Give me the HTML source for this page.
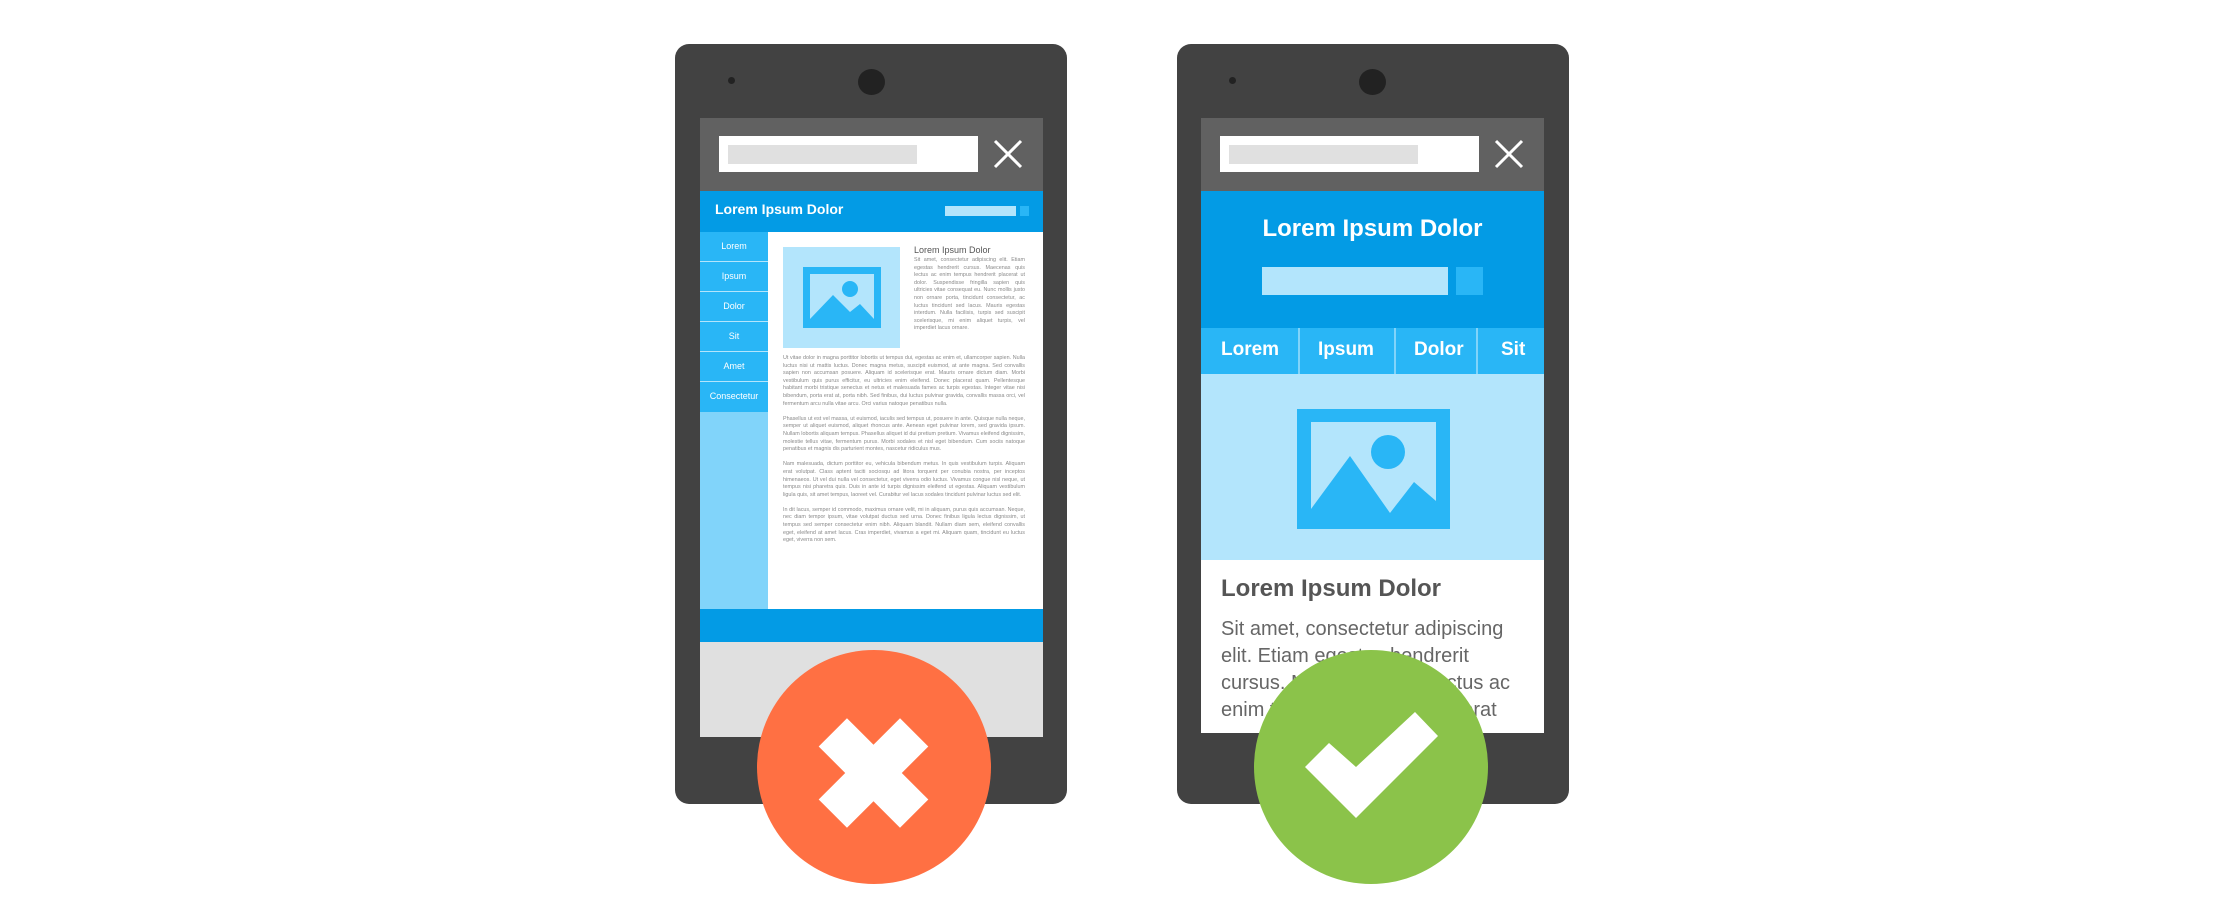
<!DOCTYPE html>
<html><head><meta charset="utf-8"><style>
*{margin:0;padding:0;box-sizing:border-box}
body{width:2234px;height:902px;background:#fff;position:relative;overflow:hidden;font-family:"Liberation Sans",Arial,sans-serif}
.a{position:absolute}
.phone{background:#424242;border-radius:14px}
.tiny{font-size:5.4px;line-height:7.6px;color:#8a8a8a;text-align:justify;overflow:hidden}
</style></head><body>

<!-- LEFT PHONE -->
<div class="a phone" style="left:675px;top:44px;width:392px;height:760px"></div>
<div class="a" style="left:728px;top:77px;width:7px;height:7px;border-radius:50%;background:#222"></div>
<div class="a" style="left:858px;top:69px;width:27px;height:26px;border-radius:50%;background:#222"></div>
<div class="a" style="left:700px;top:118px;width:343px;height:619px;background:#e0e0e0"></div>
<div class="a" style="left:700px;top:118px;width:343px;height:73px;background:#616161"></div>
<div class="a" style="left:719px;top:136px;width:259px;height:36px;background:#fff"></div>
<div class="a" style="left:728px;top:145px;width:189px;height:19px;background:#e0e0e0"></div>
<svg class="a" style="left:992px;top:138px" width="32" height="32"><path d="M3 3L29 29M29 3L3 29" stroke="#fff" stroke-width="3"/></svg>
<div class="a" style="left:700px;top:191px;width:343px;height:41px;background:#039be5"></div>
<div class="a" style="left:715px;top:201px;color:#fff;font-weight:bold;font-size:14px">Lorem Ipsum Dolor</div>
<div class="a" style="left:945px;top:206px;width:71px;height:10px;background:#b3e5fc"></div>
<div class="a" style="left:1020px;top:206px;width:9px;height:10px;background:#29b6f6"></div>
<div class="a" style="left:700px;top:232px;width:343px;height:377px;background:#fff"></div>
<div class="a" style="left:700px;top:232px;width:68px;height:377px;background:#81d4fa"></div>
<div class="a" style="left:700px;top:232px;width:68px;font-size:9px;color:#fff;text-align:center">
<div style="height:30px;line-height:29px;background:#29b6f6;border-bottom:1.5px solid #b3e5fc">Lorem</div>
<div style="height:30px;line-height:29px;background:#29b6f6;border-bottom:1.5px solid #b3e5fc">Ipsum</div>
<div style="height:30px;line-height:29px;background:#29b6f6;border-bottom:1.5px solid #b3e5fc">Dolor</div>
<div style="height:30px;line-height:29px;background:#29b6f6;border-bottom:1.5px solid #b3e5fc">Sit</div>
<div style="height:30px;line-height:29px;background:#29b6f6;border-bottom:1.5px solid #b3e5fc">Amet</div>
<div style="height:30px;line-height:29px;background:#29b6f6">Consectetur</div>
</div>
<div class="a" style="left:783px;top:247px;width:117px;height:101px;background:#b3e5fc"></div>
<svg class="a" style="left:803px;top:267px" width="78" height="61" viewBox="0 0 78 61"><rect width="78" height="61" fill="#29b6f6"/><rect x="7" y="7" width="64" height="45" fill="#b3e5fc"/><path d="M7 52L30 28L47 45L57 37L71 52Z" fill="#29b6f6"/><circle cx="47" cy="22" r="8" fill="#29b6f6"/></svg>
<div class="a" style="left:914px;top:245px;font-size:9px;color:#555">Lorem Ipsum Dolor</div>
<div class="a tiny" style="left:914px;top:257px;width:111px;height:92px">Sit amet, consectetur adipiscing elit. Etiam egestas hendrerit cursus. Maecenas quis lectus ac enim tempus hendrerit placerat ut dolor. Suspendisse fringilla sapien quis ultricies vitae consequat eu. Nunc mollis justo non ornare porta, tincidunt consectetur, ac luctus tincidunt sed lacus. Mauris egestas interdum. Nulla facilisis, turpis sed suscipit scelerisque, mi enim aliquet turpis, vel imperdiet lacus ornare.</div>
<div class="a tiny" style="left:783px;top:355px;width:242px;height:240px">Ut vitae dolor in magna porttitor lobortis ut tempus dui, egestas ac enim et, ullamcorper sapien. Nulla luctus nisi ut mattis luctus. Donec magna metus, suscipit euismod, at ante magna. Sed convallis sapien non accumsan posuere. Aliquam id scelerisque erat. Mauris ornare dictum diam. Morbi vestibulum quis purus efficitur, eu ultricies enim eleifend. Donec placerat quam. Pellentesque habitant morbi tristique senectus et netus et malesuada fames ac turpis egestas. Integer vitae nisi bibendum, porta erat at, porta nibh. Sed finibus, dui luctus pulvinar gravida, convallis massa orci, vel fermentum arcu nulla vitae arcu. Orci varius natoque penatibus nulla.<br><br>Phasellus ut est vel massa, ut euismod, iaculis sed tempus ut, posuere in ante. Quisque nulla neque, semper ut aliquet euismod, aliquet rhoncus ante. Aenean eget pulvinar lorem, sed gravida ipsum. Nullam lobortis aliquam tempus. Phasellus aliquet id dui pretium pretium. Vivamus eleifend dignissim, molestie tellus vitae, fermentum purus. Morbi sodales et nisl eget bibendum. Cum sociis natoque penatibus et magnis dis parturient montes, nascetur ridiculus mus.<br><br>Nam malesuada, dictum porttitor eu, vehicula bibendum metus. In quis vestibulum turpis. Aliquam erat volutpat. Class aptent taciti sociosqu ad litora torquent per conubia nostra, per inceptos himenaeos. Ut vel dui nulla vel consectetur, eget viverra odio luctus. Vivamus congue nisl neque, ut tempus nisi pharetra quis. Duis in ante id turpis dignissim eleifend ut egestas. Aliquam vestibulum ligula quis, sit amet tempus, laoreet vel. Curabitur vel lacus sodales tincidunt pulvinar luctus sed elit.<br><br>In dit lacus, semper id commodo, maximus ornare velit, mi in aliquam, purus quis accumsan. Neque, nec diam tempor ipsum, vitae volutpat ductus sed urna. Donec finibus ligula lectus dignissim, ut tempus sed semper consectetur enim nibh. Aliquam blandit. Nullam diam sem, eleifend convallis eget, eleifend at amet lacus. Cras imperdiet, vivamus a eget mi. Aliquam quam, tincidunt eu luctus eget, viverra non sem.</div>
<div class="a" style="left:700px;top:609px;width:343px;height:33px;background:#039be5"></div>
<div class="a" style="left:757px;top:650px;width:234px;height:234px;border-radius:50%;background:#ff7043"></div>
<div class="a" style="left:816px;top:753px;width:115px;height:40px;background:#fff;transform:rotate(45deg)"></div>
<div class="a" style="left:816px;top:753px;width:115px;height:40px;background:#fff;transform:rotate(-45deg)"></div>

<!-- RIGHT PHONE -->
<div class="a phone" style="left:1177px;top:44px;width:392px;height:760px"></div>
<div class="a" style="left:1229px;top:77px;width:7px;height:7px;border-radius:50%;background:#222"></div>
<div class="a" style="left:1359px;top:69px;width:27px;height:26px;border-radius:50%;background:#222"></div>
<div class="a" style="left:1201px;top:118px;width:343px;height:615px;background:#fff;overflow:hidden"></div>
<div class="a" style="left:1201px;top:118px;width:343px;height:73px;background:#616161"></div>
<div class="a" style="left:1220px;top:136px;width:259px;height:36px;background:#fff"></div>
<div class="a" style="left:1229px;top:145px;width:189px;height:19px;background:#e0e0e0"></div>
<svg class="a" style="left:1493px;top:138px" width="32" height="32"><path d="M3 3L29 29M29 3L3 29" stroke="#fff" stroke-width="3"/></svg>
<div class="a" style="left:1201px;top:191px;width:343px;height:137px;background:#039be5"></div>
<div class="a" style="left:1201px;top:215px;width:343px;text-align:center;color:#fff;font-weight:bold;font-size:24px">Lorem Ipsum Dolor</div>
<div class="a" style="left:1262px;top:267px;width:186px;height:28px;background:#b3e5fc"></div>
<div class="a" style="left:1456px;top:267px;width:27px;height:28px;background:#29b6f6"></div>
<div class="a" style="left:1201px;top:328px;width:343px;height:46px;background:#29b6f6"></div>
<div class="a" style="left:1298px;top:328px;width:2px;height:46px;background:#81d4fa"></div>
<div class="a" style="left:1394px;top:328px;width:2px;height:46px;background:#81d4fa"></div>
<div class="a" style="left:1476px;top:328px;width:2px;height:46px;background:#81d4fa"></div>
<div class="a" style="left:1201px;top:339px;font-size:19px;color:#fff;font-weight:bold;width:343px">
<span class="a" style="left:20px">Lorem</span><span class="a" style="left:117px">Ipsum</span><span class="a" style="left:213px">Dolor</span><span class="a" style="left:300px">Sit</span></div>
<div class="a" style="left:1201px;top:374px;width:343px;height:186px;background:#b3e5fc"></div>
<svg class="a" style="left:1297px;top:409px" width="153" height="120" viewBox="0 0 153 120"><rect width="153" height="120" fill="#29b6f6"/><rect x="14" y="13" width="125" height="91" fill="#b3e5fc"/><path d="M14 100L53 47L93 104L117 73L139 92L139 104L14 104Z" fill="#29b6f6"/><circle cx="91" cy="43" r="17" fill="#29b6f6"/></svg>
<div class="a" style="left:1221px;top:575px;font-size:24px;font-weight:bold;color:#555">Lorem Ipsum Dolor</div>
<div class="a" style="left:1221px;top:616px;width:310px;height:117px;overflow:hidden;font-size:20px;line-height:27px;color:#666">Sit amet, consectetur adipiscing elit. Etiam egestas hendrerit cursus. Maecenas quis lectus ac enim tempus hendrerit placerat</div>
<div class="a" style="left:1254px;top:650px;width:234px;height:234px;border-radius:50%;background:#8bc34a"></div>
<svg class="a" style="left:1254px;top:650px" width="234" height="234"><polygon points="51,117 75,93 102,117 161,62 184,86 102,168" fill="#fff"/></svg>
</body></html>
